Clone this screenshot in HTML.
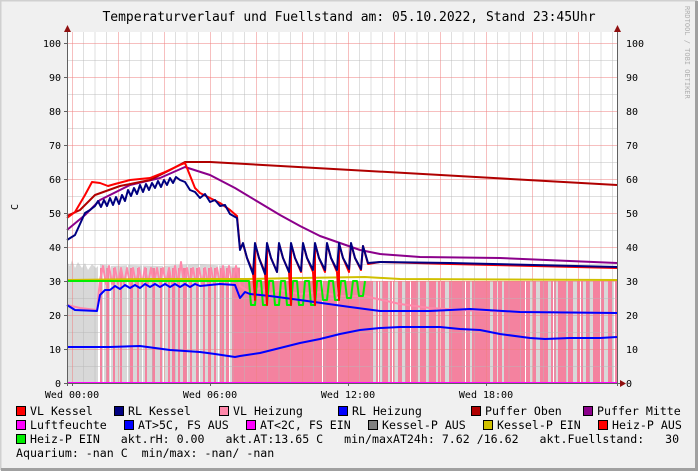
<!DOCTYPE html>
<html><head><meta charset="utf-8"><style>
html,body{margin:0;padding:0;background:#f0f0f0}
svg{display:block}
text{font-family:"DejaVu Sans Mono","Liberation Mono",monospace;fill:#000}
</style></head><body>
<svg width="698" height="471" viewBox="0 0 698 471" xmlns="http://www.w3.org/2000/svg">
<rect x="0" y="0" width="698" height="471" fill="#f0f0f0"/>
<path d="M0.5 470 V0.5 H697" stroke="#d0d0d0" stroke-width="2" fill="none"/>
<path d="M1 469.5 H696.5 V1" stroke="#a0a0a0" stroke-width="3" fill="none"/>
<text x="349" y="21" font-size="13" text-anchor="middle">Temperaturverlauf und Fuellstand am: 05.10.2022, Stand 23:45Uhr</text>
<text transform="translate(685,6) rotate(90)" font-size="7" style="fill:#b0b0b0">RRDTOOL / TOBI OETIKER</text>
<text transform="translate(18,207) rotate(-90)" font-size="10" text-anchor="middle">C</text>
<rect x="67" y="32" width="550" height="351" fill="#fff"/>
<path d="M67 383 V262 L70 266 72 260 75 268 78 262 82 268 85 263 88 270 92 264 96 268 100 264 110 266 130 265 160 266 200 264 240 267 V281 H617 V383 Z" fill="#d8d8d8"/>
<g fill="#f4829f">
<rect x="240" y="281" width="377" height="102"/>
<rect x="100" y="268" width="2" height="115"/><rect x="106" y="268" width="3" height="115"/><rect x="113" y="268" width="2" height="115"/><rect x="120" y="268" width="2" height="115"/><rect x="130" y="268" width="3" height="115"/><rect x="137" y="268" width="2" height="115"/><rect x="145" y="268" width="2" height="115"/><rect x="152" y="268" width="3" height="115"/><rect x="160" y="268" width="2" height="115"/><rect x="168" y="268" width="2" height="115"/><rect x="172" y="268" width="3" height="115"/><rect x="178" y="268" width="2" height="115"/><rect x="183" y="268" width="4" height="115"/><rect x="190" y="268" width="2" height="115"/><rect x="196" y="268" width="3" height="115"/><rect x="203" y="268" width="2" height="115"/><rect x="208" y="268" width="3" height="115"/><rect x="214" y="268" width="2" height="115"/><rect x="220" y="268" width="4" height="115"/><rect x="226" y="268" width="3" height="115"/><rect x="232" y="268" width="8" height="115"/>
</g>
<g fill="#d8d8d8">
<rect x="373" y="281" width="3" height="102"/><rect x="380" y="281" width="2" height="102"/><rect x="388" y="281" width="2" height="102"/><rect x="394" y="281" width="4" height="102"/><rect x="402" y="281" width="3" height="102"/><rect x="418" y="281" width="2" height="102"/><rect x="426" y="281" width="3" height="102"/><rect x="436" y="281" width="2" height="102"/><rect x="445" y="281" width="4" height="102"/><rect x="470" y="281" width="2" height="102"/><rect x="490" y="281" width="3" height="102"/><rect x="502" y="281" width="2" height="102"/><rect x="530" y="281" width="3" height="102"/><rect x="536" y="281" width="4" height="102"/><rect x="548" y="281" width="3" height="102"/><rect x="556" y="281" width="2" height="102"/><rect x="566" y="281" width="2" height="102"/><rect x="573" y="281" width="4" height="102"/><rect x="583" y="281" width="3" height="102"/><rect x="590" y="281" width="3" height="102"/><rect x="604" y="281" width="4" height="102"/><rect x="612" y="281" width="3" height="102"/>
</g>
<g fill="#fff">
<rect x="98" y="262" width="2" height="121"/><rect x="103" y="262" width="1" height="121"/><rect x="110" y="262" width="1" height="121"/><rect x="127" y="262" width="1" height="121"/><rect x="142" y="262" width="1" height="121"/><rect x="163" y="262" width="1" height="121"/><rect x="187" y="262" width="1" height="121"/><rect x="199" y="262" width="1" height="121"/><rect x="218" y="262" width="1" height="121"/><rect x="229" y="262" width="1" height="121"/>
<rect x="322" y="281" width="1" height="102"/><rect x="337" y="281" width="1" height="102"/><rect x="378" y="281" width="1" height="102"/><rect x="392" y="281" width="1" height="102"/><rect x="410" y="281" width="1" height="102"/><rect x="440" y="281" width="1" height="102"/><rect x="465" y="281" width="1" height="102"/><rect x="497" y="281" width="1" height="102"/><rect x="525" y="281" width="1" height="102"/><rect x="553" y="281" width="1" height="102"/><rect x="580" y="281" width="1" height="102"/><rect x="600" y="281" width="1" height="102"/><rect x="614" y="281" width="1" height="102"/>
</g>
<g stroke="#b8b8b8" stroke-opacity="0.45" stroke-width="1">
<path d="M83.5 32V383M95 32V383M106.5 32V383M129.5 32V383M141 32V383M152.5 32V383M175.5 32V383M187 32V383M198.5 32V383M221.5 32V383M233 32V383M244.5 32V383M267.5 32V383M279 32V383M290.5 32V383M313.5 32V383M325 32V383M336.5 32V383M359.5 32V383M371 32V383M382.5 32V383M405.5 32V383M417 32V383M428.5 32V383M451.5 32V383M463 32V383M474.5 32V383M497.5 32V383M509 32V383M520.5 32V383M543.5 32V383M555 32V383M566.5 32V383M589.5 32V383M601 32V383M612.5 32V383"/>
<path d="M67 366.5H617M67 332.5H617M67 298.5H617M67 264.5H617M67 230.5H617M67 196.5H617M67 162.5H617M67 128.5H617M67 94.5H617M67 60.5H617"/>
</g>
<g stroke="#f08080" stroke-opacity="0.5" stroke-width="1">
<path d="M72.5 32V383M118.5 32V383M164.5 32V383M210.5 32V383M256.5 32V383M302.5 32V383M348.5 32V383M394.5 32V383M440.5 32V383M486.5 32V383M532.5 32V383M578.5 32V383"/>
<path d="M67 349.5H617M67 315.5H617M67 281.5H617M67 247.5H617M67 213.5H617M67 179.5H617M67 145.5H617M67 111.5H617M67 77.5H617M67 43.5H617"/>
</g>
<g fill="none" stroke-width="2" stroke-linejoin="round">
<polyline stroke="#0000ff" points="67,347 110,347 140,346 170,350 200,352 215,354 235,357 240,356 260,353 280,348 300,343 320,339 340,334 360,330 380,328 400,327 440,327 460,329 480,330 500,334 530,338 545,339 570,338 600,338 617,337"/>
<polyline stroke="#ff88aa" points="67,305 80,308 97,310 100,280 103,266 106,284 109,266 112,284 115,268 118,284 121,268 124,284 127,268 130,284 133,268 136,284 139,268 142,284 145,268 148,284 151,268 154,284 157,268 160,284 163,268 166,284 169,268 172,284 175,266 178,284 181,262 184,284 187,268 190,284 193,268 196,284 199,268 202,284 205,268 208,284 211,268 214,284 217,268 220,284 223,266 226,284 229,266 232,284 236,266 240,286 250,292 260,288 270,294 280,290 300,294 320,292 340,296 365,296 373,298 400,304 430,308 480,311 617,313"/>
<polyline stroke="#d0c000" points="67,280 150,279 245,279 300,278 365,277 400,279 617,280"/>
<polyline stroke="#00ee00" points="67,281 245,281 249,281 251,305 255,305 257,281 261,281 263,305 267,305 269,281 273,281 275,305 279,305 281,281 285,281 287,305 291,305 293,281 297,281 299,305 303,305 305,281 309,281 311,305 315,305 317,281 321,281 323,300 327,300 329,281 333,281 335,300 339,300 341,281 345,281 347,298 351,298 353,281 357,281 359,296 363,296 365,281"/>
<polyline stroke="#0000ff" points="67,305 75,310 97,311 100,295 105,290 110,290 115,286 120,289 125,285 130,288 135,285 140,288 145,284 150,287 155,284 160,287 165,284 170,287 175,284 180,287 185,284 190,287 195,284 200,286 210,285 220,284 235,285 240,298 245,292 250,294 270,296 300,300 350,307 380,311 430,311 470,309 520,312 617,313"/>
<polyline stroke="#8b008b" points="67,230 85,215 100,200 130,185 160,178 185,167 210,175 235,188 260,203 280,215 300,226 320,236 340,243 360,250 380,254 420,257 500,258 617,263"/>
<polyline stroke="#b00000" points="67,216 80,210 95,195 120,186 150,180 170,170 185,162 210,162 617,185"/>
<polyline stroke="#ff0000" points="67,218 75,212 85,195 92,182 100,183 108,186 115,184 130,180 150,178 165,172 180,165 185,163 195,188 200,193 210,198 220,203 230,210 237,216 240,248 243,244 247,258 253,272 255,300 255,244 259,258 265,272 267,305 267,244 271,258 277,272 279,244 283,258 289,272 291,305 291,244 295,258 301,272 303,244 307,258 313,272 315,305 315,244 319,258 325,272 327,244 331,258 337,272 339,300 339,244 343,258 349,272 351,244 355,258 361,270 363,246 368,264 380,262 450,264 617,268"/>
<polyline stroke="#000080" points="67,240 75,235 85,213 90,210 95,206 98,201 101,207 104,200 107,206 110,198 113,205 116,197 119,204 122,195 125,201 128,190 131,196 134,188 137,194 140,185 143,192 146,184 149,190 152,183 155,188 158,181 161,187 164,180 167,185 170,178 173,183 176,177 180,180 185,182 190,190 195,192 200,198 205,194 210,202 215,200 220,206 225,205 230,214 237,218 240,250 243,243 247,258 253,274 255,243 259,258 265,274 267,243 271,258 277,272 279,243 283,258 289,272 291,243 295,258 301,271 303,243 307,258 313,270 315,243 319,258 325,270 327,243 331,258 337,270 339,243 343,258 349,269 351,243 355,258 361,269 363,246 368,263 380,262 450,263 617,267"/>
<line x1="67" y1="383" x2="617" y2="383" stroke="#ff00ff"/>
</g>
<g stroke="#606060" stroke-width="1">
<path d="M67.5 30V386M617.5 30V386M64 383.5H620"/>
<path d="M64 349.5h3M64 315.5h3M64 281.5h3M64 247.5h3M64 213.5h3M64 179.5h3M64 145.5h3M64 111.5h3M64 77.5h3M64 43.5h3"/>
<path d="M72.5 383v3M210.5 383v3M348.5 383v3M486.5 383v3"/>
</g>
<g fill="#901010">
<path d="M64 32 L67.5 25 L71 32Z"/><path d="M614 32 L617.5 25 L621 32Z"/><path d="M620 380 L626 383.5 L620 387Z"/>
</g>
<g font-size="10" text-anchor="end">
<text x="61" y="387">0</text><text x="61" y="353">10</text><text x="61" y="319">20</text><text x="61" y="285">30</text><text x="61" y="251">40</text><text x="61" y="217">50</text><text x="61" y="183">60</text><text x="61" y="149">70</text><text x="61" y="115">80</text><text x="61" y="81">90</text><text x="61" y="47">100</text>
</g>
<g font-size="10">
<text x="626" y="387">0</text><text x="626" y="353">10</text><text x="626" y="319">20</text><text x="626" y="285">30</text><text x="626" y="251">40</text><text x="626" y="217">50</text><text x="626" y="183">60</text><text x="626" y="149">70</text><text x="626" y="115">80</text><text x="626" y="81">90</text><text x="626" y="47">100</text>
</g>
<g font-size="10" text-anchor="middle">
<text x="72" y="398">Wed 00:00</text><text x="210" y="398">Wed 06:00</text><text x="348" y="398">Wed 12:00</text><text x="486" y="398">Wed 18:00</text>
</g>
<g stroke="#000" stroke-width="1">
<rect x="16.5" y="406.5" width="9" height="9" fill="#ff0000"/>
<rect x="114.5" y="406.5" width="9" height="9" fill="#000080"/>
<rect x="219.5" y="406.5" width="9" height="9" fill="#ff88aa"/>
<rect x="338.5" y="406.5" width="9" height="9" fill="#0000ff"/>
<rect x="471.5" y="406.5" width="9" height="9" fill="#b00000"/>
<rect x="583.5" y="406.5" width="9" height="9" fill="#8b008b"/>
<rect x="16.5" y="420.5" width="9" height="9" fill="#ff00ff"/>
<rect x="124.5" y="420.5" width="9" height="9" fill="#0000ff"/>
<rect x="246.5" y="420.5" width="9" height="9" fill="#ff00ff"/>
<rect x="368.5" y="420.5" width="9" height="9" fill="#808080"/>
<rect x="483.5" y="420.5" width="9" height="9" fill="#d0c000"/>
<rect x="598.5" y="420.5" width="9" height="9" fill="#ff0000"/>
<rect x="16.5" y="434.5" width="9" height="9" fill="#00ee00"/>
</g>
<g font-size="11.6">
<text x="30" y="415">VL Kessel</text><text x="128" y="415">RL Kessel</text><text x="233" y="415">VL Heizung</text><text x="352" y="415">RL Heizung</text><text x="485" y="415">Puffer Oben</text><text x="597" y="415">Puffer Mitte</text>
<text x="30" y="429">Luftfeuchte</text><text x="138" y="429">AT&gt;5C, FS AUS</text><text x="260" y="429">AT&lt;2C, FS EIN</text><text x="382" y="429">Kessel-P AUS</text><text x="497" y="429">Kessel-P EIN</text><text x="612" y="429">Heiz-P AUS</text>
<text x="30" y="443" xml:space="preserve">Heiz-P EIN   akt.rH: 0.00   akt.AT:13.65 C   min/maxAT24h: 7.62 /16.62   akt.Fuellstand:   30</text>
<text x="16" y="457" xml:space="preserve">Aquarium: -nan C  min/max: -nan/ -nan</text>
</g>
</svg>
</body></html>
